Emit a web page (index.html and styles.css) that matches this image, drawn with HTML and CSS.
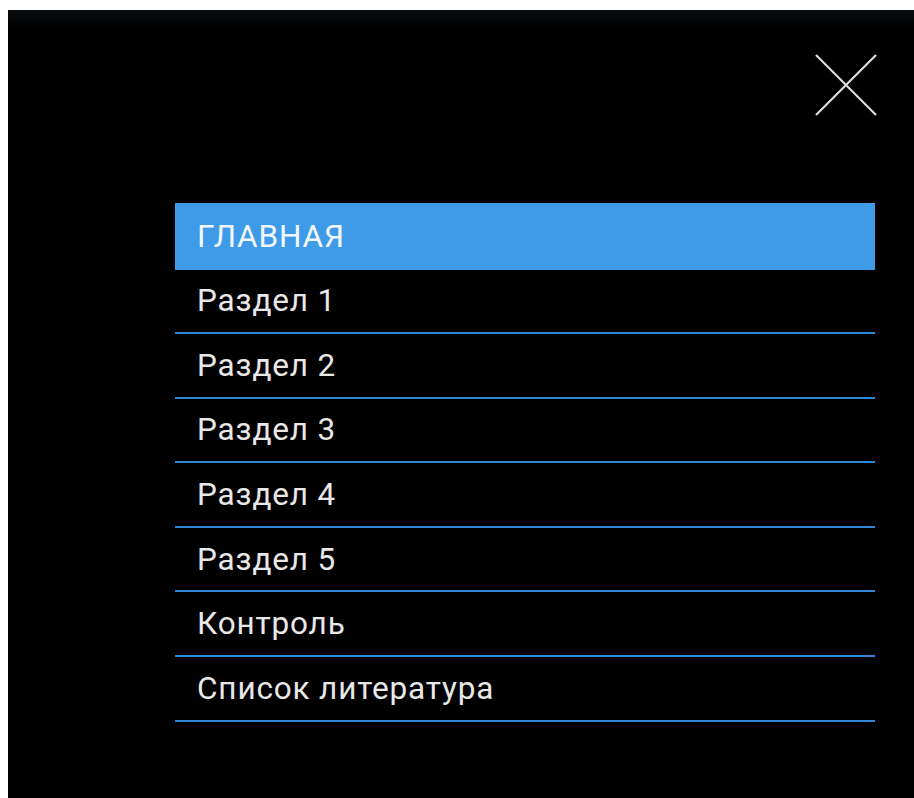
FILE: index.html
```html
<!DOCTYPE html>
<html lang="ru">
<head>
<meta charset="utf-8">
<title>Меню</title>
<link rel="stylesheet" href="styles.css">
</head>
<body>
<div class="panel">
  <div class="panel-top">
    <button class="close" aria-label="Закрыть">
      <svg width="62" height="62" viewBox="0 0 62 62" aria-hidden="true">
        <path d="M1 1 L61 61 M61 1 L1 61" stroke="#dcdcdc" stroke-width="2.2" fill="none"/>
      </svg>
    </button>
  </div>
  <nav class="menu">
    <a class="menu-item active" href="#">ГЛАВНАЯ</a>
    <a class="menu-item" href="#">Раздел 1</a>
    <a class="menu-item" href="#">Раздел 2</a>
    <a class="menu-item" href="#">Раздел 3</a>
    <a class="menu-item" href="#">Раздел 4</a>
    <a class="menu-item" href="#">Раздел 5</a>
    <a class="menu-item" href="#">Контроль</a>
    <a class="menu-item" href="#">Список литература</a>
  </nav>
</div>
</body>
</html>
```
FILE: styles.css
```css
html, body {
  margin: 0;
  height: 100%;
  overflow: hidden;
  background: #fff;
}

body {
  padding: 10px 0 0 8px;
  box-sizing: border-box;
}

.panel {
  height: 100%;
  background: linear-gradient(to bottom, #0a0d10 0, #000 18px) #000;
  box-sizing: border-box;
  padding: 44px 39px 0 0;
  display: flex;
  flex-direction: column;
  align-items: flex-end;
  font-family: Roboto, "Noto Sans", sans-serif;
}

.panel-top {
  display: flex;
  justify-content: flex-end;
  width: 100%;
}

.close {
  background: none;
  border: 0;
  padding: 0;
  margin: 0 -2px 0 0;
  width: 62px;
  height: 62px;
  cursor: pointer;
}

.close svg {
  display: block;
}

.menu {
  margin-top: 87px;
  width: 700px;
  display: flex;
  flex-direction: column;
}

.menu-item {
  display: flex;
  align-items: center;
  height: 62.6px;
  padding-left: 22px;
  border-bottom: 2px solid #2f86d4;
  color: #e8e8e8;
  text-decoration: none;
  font-size: 31.5px;
  letter-spacing: 0.85px;
}

.menu-item.active {
  height: 66.5px;
  border-bottom: 0;
  background: #3f9be8;
  color: #f2f7fc;
}
```
